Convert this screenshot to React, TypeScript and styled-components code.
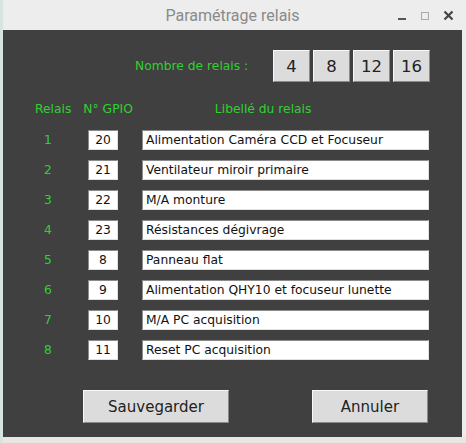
import styled, { createGlobalStyle } from "styled-components";

const relais = [
  { gpio: "20", label: "Alimentation Caméra CCD et Focuseur" },
  { gpio: "21", label: "Ventilateur miroir primaire" },
  { gpio: "22", label: "M/A monture" },
  { gpio: "23", label: "Résistances dégivrage" },
  { gpio: "8", label: "Panneau flat" },
  { gpio: "9", label: "Alimentation QHY10 et focuseur lunette" },
  { gpio: "10", label: "M/A PC acquisition" },
  { gpio: "11", label: "Reset PC acquisition" },
];

const counts = ["4", "8", "12", "16"];

function App() {
  return (
    <>
      <GlobalStyle />
      <Window>
        <TitleBar>
          <Title>Paramétrage relais</Title>
          <Controls>
            <svg width="10" height="10" viewBox="0 0 10 10">
              <rect x="1" y="7" width="8" height="2" fill="#555" />
            </svg>
            <svg width="10" height="10" viewBox="0 0 10 10">
              <rect x="1.5" y="1.5" width="7" height="7" fill="none" stroke="#aaa" strokeWidth="1" />
            </svg>
            <svg width="11" height="11" viewBox="0 0 11 11">
              <path d="M1.5 1.5 L9.5 9.5 M9.5 1.5 L1.5 9.5" stroke="#444" strokeWidth="2.2" />
            </svg>
          </Controls>
        </TitleBar>
        <Body>
          <CountRow>
            <GreenText>Nombre de relais :</GreenText>
            <CountGroup>
              {counts.map((c) => (
                <CountButton key={c}>{c}</CountButton>
              ))}
            </CountGroup>
          </CountRow>
          <HeaderRow>
            <GreenText>Relais</GreenText>
            <GreenText>N° GPIO</GreenText>
            <HeaderLabel>Libellé du relais</HeaderLabel>
          </HeaderRow>
          <Rows>
            {relais.map((r, i) => (
              <Row key={i}>
                <Num>{i + 1}</Num>
                <GpioInput defaultValue={r.gpio} />
                <LabelInput defaultValue={r.label} />
              </Row>
            ))}
          </Rows>
          <Footer>
            <ActionButton $width={146}>Sauvegarder</ActionButton>
            <ActionButton $width={116}>Annuler</ActionButton>
          </Footer>
        </Body>
        <Taskbar />
      </Window>
    </>
  );
}

export default App;

const GlobalStyle = createGlobalStyle`
  html, body {
    margin: 0;
    padding: 0;
    background: #ececec;
  }
`;

const Window = styled.div`
  width: 466px;
  height: 443px;
  display: flex;
  flex-direction: column;
  background: #ededed;
  border-left: 3px solid #d6e6df;
  box-sizing: border-box;
  overflow: hidden;
`;

const TitleBar = styled.div`
  height: 30px;
  position: relative;
  display: flex;
  align-items: center;
  justify-content: center;
  flex-shrink: 0;
`;

const Title = styled.div`
  font-family: Roboto, "Noto Sans", sans-serif;
  font-size: 16px;
  color: #8a8a8a;
  margin-left: -4px;
`;

const Controls = styled.div`
  position: absolute;
  right: 12px;
  top: 10px;
  display: flex;
  align-items: center;
  gap: 13px;
`;

const Body = styled.div`
  flex: 1;
  margin-right: 4px;
  background: #404040;
  display: flex;
  flex-direction: column;
  font-family: "DejaVu Sans", sans-serif;
`;

const GreenText = styled.span`
  color: #30d030;
  font-size: 12.3px;
`;

const CountRow = styled.div`
  display: flex;
  align-items: center;
  padding: 20px 32px 0 132px;
`;

const CountGroup = styled.div`
  display: flex;
  gap: 3px;
  margin-left: auto;
`;

const CountButton = styled.button`
  width: 37px;
  height: 32px;
  padding: 0;
  background: #dcdcdc;
  border: 1px solid;
  border-color: #f8f8f8 #8a8a8a #8a8a8a #f8f8f8;
  font-family: "DejaVu Sans", sans-serif;
  font-size: 16.5px;
  color: #222;
`;

const HeaderRow = styled.div`
  display: flex;
  align-items: center;
  padding: 20px 0 0 32px;
  gap: 12px;
  height: 14px;
`;

const HeaderLabel = styled(GreenText)`
  margin-left: 70px;
`;

const Rows = styled.div`
  display: flex;
  flex-direction: column;
  gap: 10px;
  margin-top: 14px;
`;

const Row = styled.div`
  display: flex;
  align-items: center;
  height: 20px;
`;

const Num = styled.span`
  width: 40px;
  margin-left: 25px;
  text-align: center;
  color: #30d030;
  font-size: 12.3px;
`;

const Field = styled.input`
  box-sizing: border-box;
  height: 20px;
  background: #fff;
  border: 1px solid;
  border-color: #8c8c8c #e0e0e0 #e0e0e0 #8c8c8c;
  font-family: "DejaVu Sans", sans-serif;
  font-size: 12.3px;
  color: #111;
  padding: 0 3px;
  outline: none;
`;

const GpioInput = styled(Field)`
  width: 30px;
  margin-left: 20px;
  text-align: center;
`;

const LabelInput = styled(Field)`
  width: 287px;
  margin-left: 24px;
`;

const Footer = styled.div`
  display: flex;
  justify-content: space-between;
  padding: 30px 34px 0 80px;
`;

const ActionButton = styled.button<{ $width: number }>`
  width: ${(p) => p.$width}px;
  height: 33px;
  background: #dcdcdc;
  border: 1px solid;
  border-color: #f8f8f8 #8a8a8a #8a8a8a #f8f8f8;
  font-family: "DejaVu Sans", sans-serif;
  font-size: 15px;
  color: #222;
`;

const Taskbar = styled.div`
  height: 6px;
  flex-shrink: 0;
  background: #e8e6e2;
`;
